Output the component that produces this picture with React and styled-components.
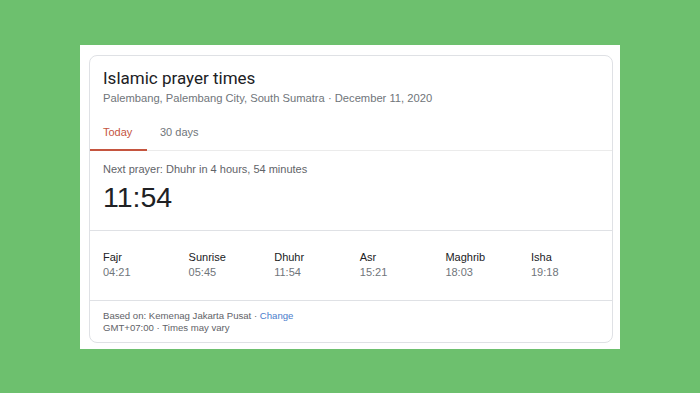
import styled, { createGlobalStyle } from "styled-components";

const prayers = [
    { name: "Fajr", time: "04:21" },
    { name: "Sunrise", time: "05:45" },
    { name: "Dhuhr", time: "11:54" },
    { name: "Asr", time: "15:21" },
    { name: "Maghrib", time: "18:03" },
    { name: "Isha", time: "19:18" },
];

const GlobalStyle = createGlobalStyle`
    html, body {
        margin: 0;
        padding: 0;
        background: #6dc06e;
    }
    body {
        width: 700px;
        height: 393px;
        font-family: "Liberation Sans", Arial, sans-serif;
    }
`;

const Page = styled.div`
    height: 393px;
    padding-top: 45px;
    padding-left: 80px;
    box-sizing: border-box;
`;

const Panel = styled.div`
    width: 540px;
    height: 304px;
    background: #ffffff;
    padding: 10px 7px 6px 9px;
    box-sizing: border-box;
`;

const Card = styled.div`
    height: 100%;
    border: 1px solid #dfe1e5;
    border-radius: 8px;
    box-sizing: border-box;
    display: flex;
    flex-direction: column;
`;

const Header = styled.div`
    padding: 11px 13px 0;
`;

const Title = styled.div`
    font-family: Roboto, "Liberation Sans", sans-serif;
    font-size: 17px;
    line-height: 22px;
    color: #202124;
`;

const Subtitle = styled.div`
    font-size: 11.2px;
    line-height: 16px;
    color: #70757a;
    margin-top: 1px;
`;

const Tabs = styled.div`
    display: flex;
    margin-top: 9px;
    border-bottom: 1px solid #ebebeb;
`;

const Tab = styled.div`
    font-size: 11px;
    line-height: 14px;
    padding: 10px 0 10px 13px;
    width: ${(p) => p.$width}px;
    box-sizing: border-box;
    color: ${(p) => (p.$active ? "#c5553f" : "#70757a")};
    border-bottom: 2px solid ${(p) => (p.$active ? "#c5553f" : "transparent")};
    margin-bottom: -1px;
`;

const NextSection = styled.div`
    padding: 11px 13px 15px;
    border-bottom: 1px solid #dfe1e5;
`;

const NextLabel = styled.div`
    font-size: 11px;
    line-height: 14px;
    color: #5f6368;
`;

const BigTime = styled.div`
    font-size: 28.5px;
    line-height: 36px;
    color: #202124;
    margin-top: 3px;
`;

const PrayerGrid = styled.div`
    display: grid;
    grid-template-columns: repeat(6, 85.6px);
    padding: 19px 13px 20px;
    border-bottom: 1px solid #dfe1e5;
`;

const PrayerName = styled.div`
    font-size: 11px;
    line-height: 15px;
    color: #202124;
`;

const PrayerTime = styled.div`
    font-size: 11px;
    line-height: 15px;
    color: #70757a;
`;

const Footer = styled.div`
    padding: 9px 13px 0;
    font-size: 9.6px;
    line-height: 12px;
    color: #5f6368;
`;

const Link = styled.span`
    color: #4a7ccc;
`;

export default function App() {
    return (
        <>
            <GlobalStyle />
            <Page>
                <Panel>
                    <Card>
                        <Header>
                            <Title>Islamic prayer times</Title>
                            <Subtitle>
                                Palembang, Palembang City, South Sumatra · December 11, 2020
                            </Subtitle>
                        </Header>
                        <Tabs>
                            <Tab $active $width={57}>Today</Tab>
                            <Tab $width={80}>30 days</Tab>
                        </Tabs>
                        <NextSection>
                            <NextLabel>Next prayer: Dhuhr in 4 hours, 54 minutes</NextLabel>
                            <BigTime>11:54</BigTime>
                        </NextSection>
                        <PrayerGrid>
                            {prayers.map((p) => (
                                <div key={p.name}>
                                    <PrayerName>{p.name}</PrayerName>
                                    <PrayerTime>{p.time}</PrayerTime>
                                </div>
                            ))}
                        </PrayerGrid>
                        <Footer>
                            <div>
                                Based on: Kemenag Jakarta Pusat · <Link>Change</Link>
                            </div>
                            <div>GMT+07:00 · Times may vary</div>
                        </Footer>
                    </Card>
                </Panel>
            </Page>
        </>
    );
}
